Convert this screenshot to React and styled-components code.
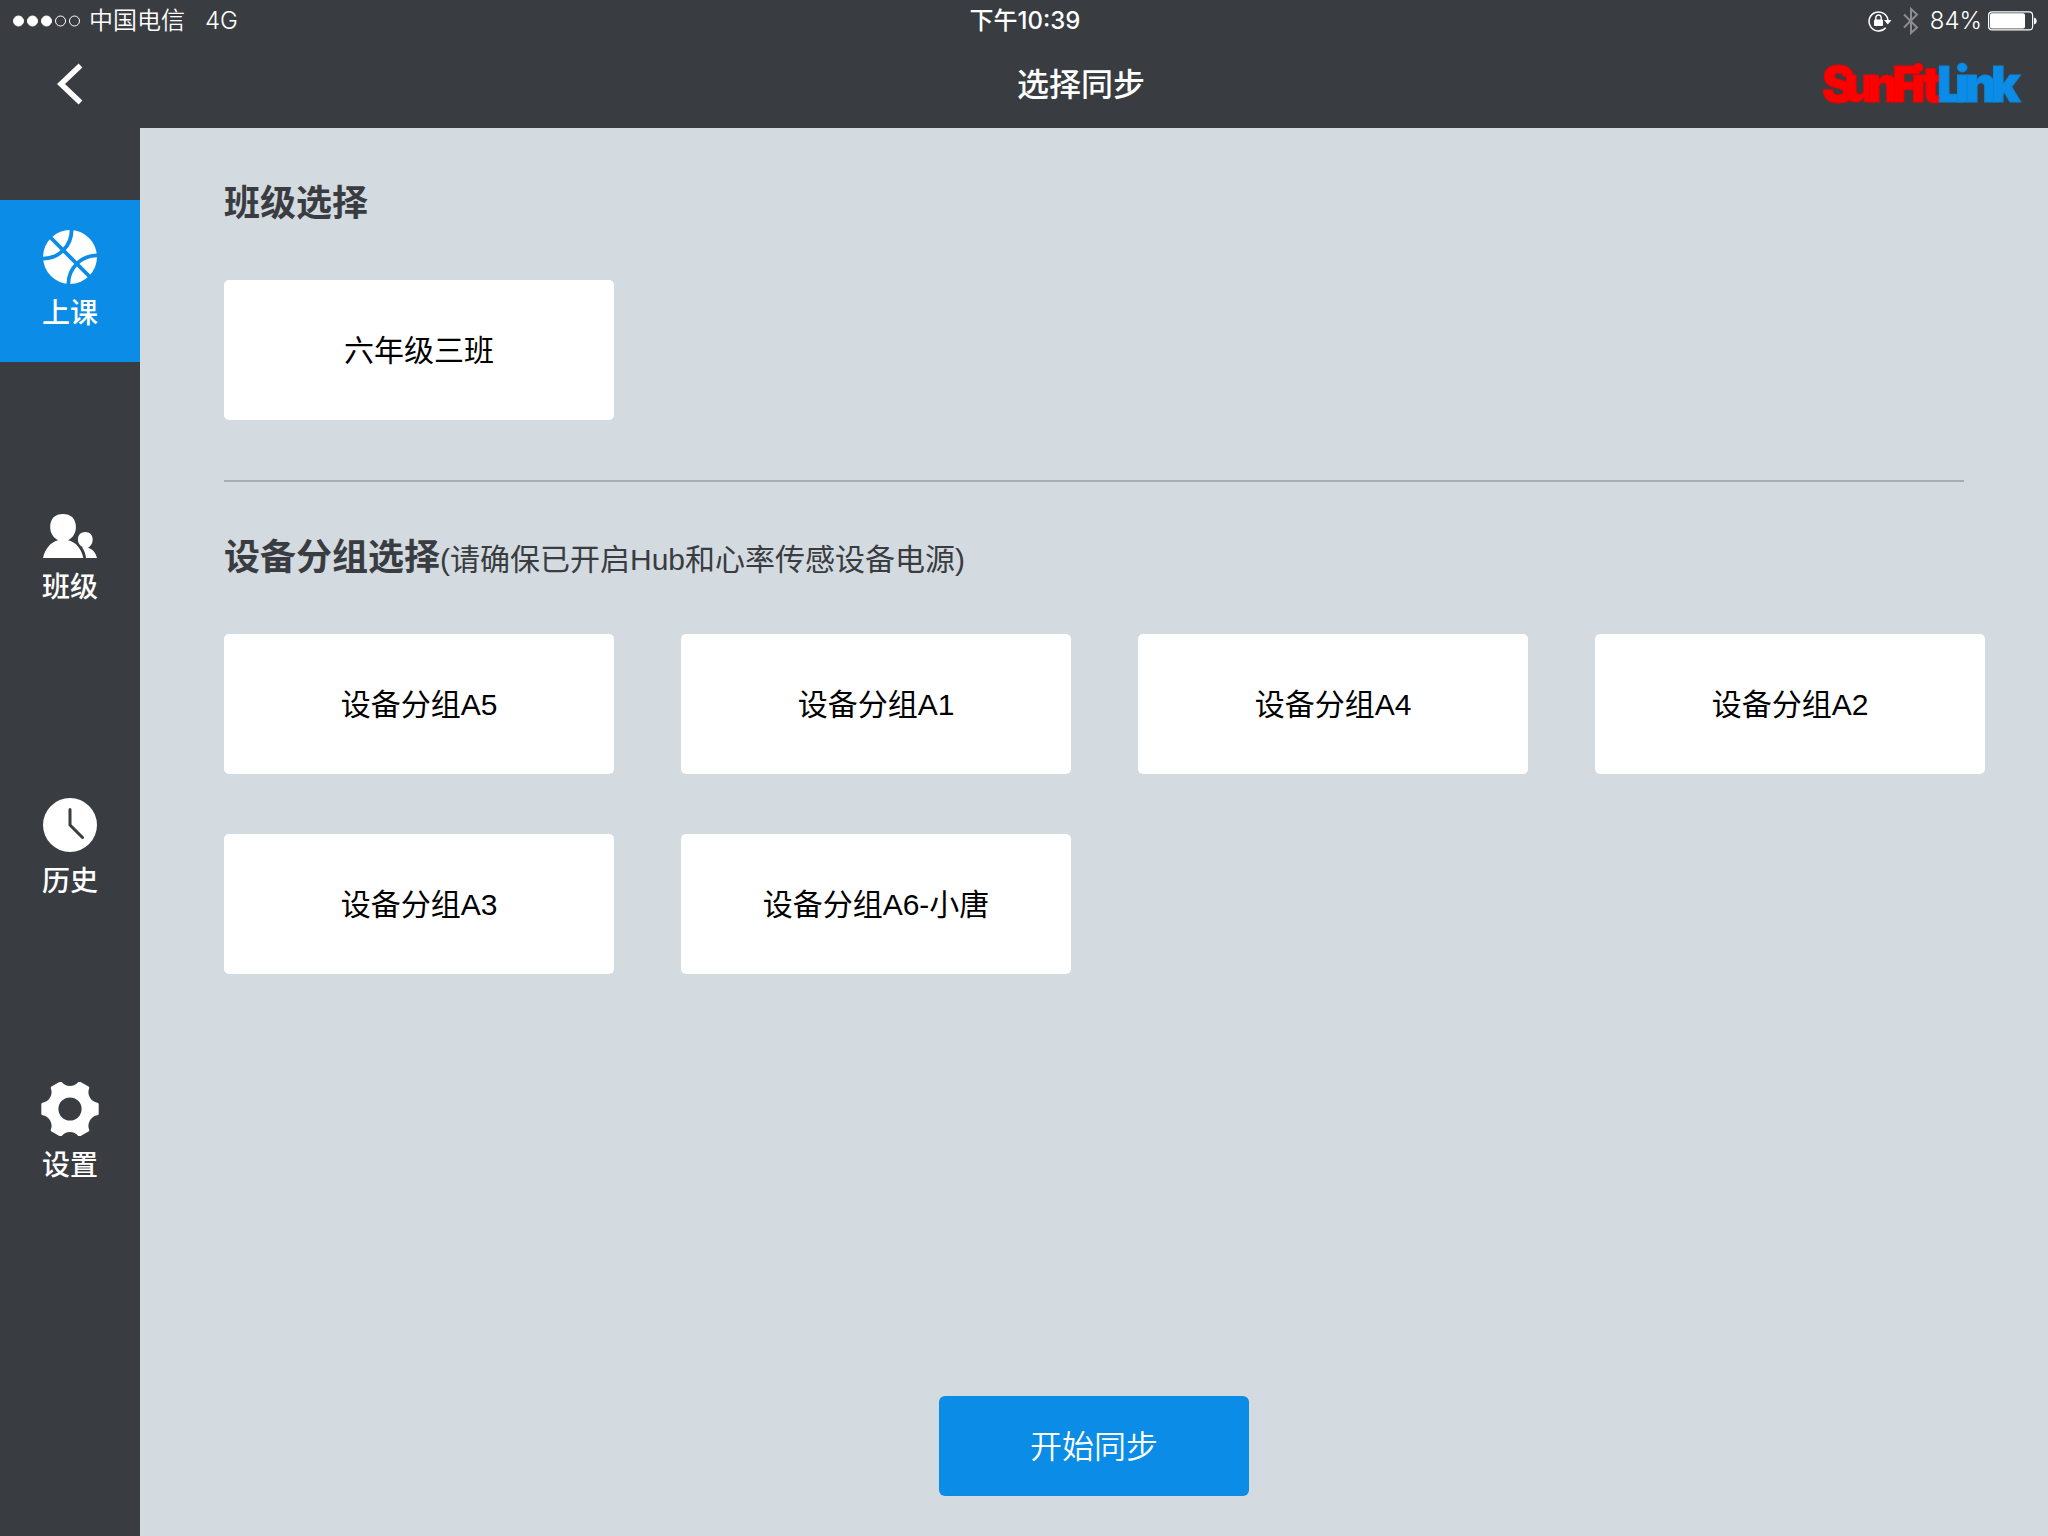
import React from 'react';
import styled, { createGlobalStyle } from 'styled-components';

const DARK = '#393c40';
const BLUE = '#0a8ce7';
const PAGE = '#d3dae0';

const GlobalStyle = createGlobalStyle`
  *,
  *::before,
  *::after {
    box-sizing: border-box;
  }

  body {
    margin: 0;
    background: ${PAGE};
    font-family: 'Liberation Sans', 'Noto Sans CJK SC', sans-serif;
    color: ${DARK};
  }

  button {
    font-family: inherit;
    border: none;
    padding: 0;
    cursor: pointer;
  }
`;

const Screen = styled.div`
  min-height: 100vh;
  display: flex;
  flex-direction: column;
`;

const StatusBar = styled.div`
  display: grid;
  grid-template-columns: 1fr auto 1fr;
  align-items: center;
  height: 40px;
  padding: 2px 11px 0 13px;
  background: ${DARK};
  color: #fff;
  font-family: Inter, 'Noto Sans CJK SC', sans-serif;
  font-size: 24px;
  line-height: 32px;
  font-weight: 350;
`;

const StatusLeft = styled.div`
  display: flex;
  align-items: center;
`;

const Dots = styled.svg`
  margin-right: 8px;
`;

const Network = styled.span`
  margin-left: 20px;
`;

const Clock = styled.time`
  font-weight: 500;
`;

const StatusRight = styled.div`
  display: flex;
  align-items: center;
  justify-content: flex-end;
`;

const Bluetooth = styled.svg`
  margin-left: 11px;
`;

const Battery = styled.div`
  display: flex;
  align-items: center;
  gap: 6px;
  margin-left: 11px;
`;

const Header = styled.header`
  display: grid;
  grid-template-columns: 140px 1fr;
  align-items: center;
  height: 88px;
  padding-right: 26px;
  background: ${DARK};
  color: #fff;
`;

const BackButton = styled.button`
  display: flex;
  align-items: center;
  justify-content: center;
  height: 88px;
  background: none;
`;

const Title = styled.h1`
  grid-area: 1 / 2;
  justify-self: center;
  margin: 0;
  padding-top: 2px;
  font-size: 32px;
  line-height: 48px;
  font-weight: 500;
`;

const Logo = styled.svg`
  grid-area: 1 / 2;
  justify-self: end;
  margin-right: -4px;
  font-family: Inter, sans-serif;
  font-size: 49px;
  font-weight: 900;
`;

const Body = styled.div`
  flex: 1;
  display: flex;
`;

const Sidebar = styled.nav`
  flex: 0 0 140px;
  display: flex;
  flex-direction: column;
  gap: 122px;
  padding: 72px 0;
  background: ${DARK};
`;

const NavItem = styled.a`
  display: flex;
  flex-direction: column;
  align-items: center;
  gap: 10px;
  height: 162px;
  padding-top: 30px;
  background: ${({ $active }) => ($active ? BLUE : 'transparent')};
  color: #fff;
  font-size: 28px;
  line-height: 40px;
  font-weight: 500;
  text-decoration: none;
`;

const Main = styled.main`
  flex: 1;
  display: flex;
  flex-direction: column;
  padding: 0 63px 40px 84px;
`;

const Section = styled.section`
  padding: 50px 0 60px;
`;

const Heading = styled.h2`
  margin: 0 0 50px;
  font-size: 36px;
  line-height: 52px;
  font-weight: 600;
`;

const Hint = styled.span`
  font-size: 30px;
  line-height: 44px;
  font-weight: 400;
`;

const Cards = styled.div`
  display: grid;
  grid-template-columns: repeat(4, 1fr);
  gap: 60px 67px;
`;

const Card = styled.button`
  height: 140px;
  padding-top: 2px;
  border-radius: 5px;
  background: #fff;
  color: #000;
  font-size: 30px;
  line-height: 44px;
`;

const Divider = styled.hr`
  width: calc(100% - 21px);
  height: 2px;
  margin: 0;
  border: none;
  background: #a4adb6;
`;

// The footer is centred on the whole content pane, not on the card grid.
const Footer = styled.footer`
  display: flex;
  justify-content: center;
  margin-top: auto;
  padding-right: 21px;
`;

const StartButton = styled.button`
  width: 310px;
  height: 100px;
  padding-top: 2px;
  border-radius: 6px;
  background: ${BLUE};
  color: #fff;
  font-size: 32px;
  line-height: 48px;
  font-weight: 350;
`;

function BallIcon() {
  return (
    <svg width="54" height="54" viewBox="0 0 54 54" aria-hidden="true">
      <circle cx="27" cy="27" r="27" fill="#fff" />
      <g fill="none" stroke={BLUE} strokeWidth="3.8">
        <path d="M7 7 47 47" />
        <circle cx="0" cy="0" r="28.6" />
        <circle cx="54" cy="54" r="28.6" />
      </g>
    </svg>
  );
}

function PeopleIcon() {
  return (
    <svg
      width="54"
      height="44"
      viewBox="0 0 54 44"
      fill="#fff"
      aria-hidden="true"
    >
      <path d="M20 0c8 0 12.9 4.6 12.9 13 0 6.3-3.1 10.9-7.9 13.3C32.6 28 38.5 34.5 40.3 44H0c2-9.5 7.9-16 15.3-17.7C10.4 23.9 7.2 19.3 7.2 13 7.2 4.6 12 0 20 0Z" />
      <path d="M42.3 18c4.6 0 7.4 3 7.4 7.5 0 3.8-1.9 6.7-4.6 8.3 4.6 1.5 7.8 5.2 8.9 10.2H43c-.4-4.2-1.7-7.6-3.9-10.4l1-.3c-3.2-1.5-5.2-4.3-5.2-7.8 0-4.5 2.8-7.5 7.4-7.5Z" />
    </svg>
  );
}

function HistoryIcon() {
  return (
    <svg width="54" height="54" viewBox="0 0 54 54" aria-hidden="true">
      <circle cx="27" cy="27" r="27" fill="#fff" />
      <path
        d="M27 11.5V27l12.5 12.5"
        fill="none"
        stroke={DARK}
        strokeWidth="3"
        strokeLinecap="round"
        strokeLinejoin="round"
      />
    </svg>
  );
}

const polar = (radius, degrees) => {
  const angle = (degrees * Math.PI) / 180;
  const x = 29 + radius * Math.cos(angle);
  const y = 27 + radius * Math.sin(angle);
  return `${x.toFixed(2)} ${y.toFixed(2)}`;
};

// Six teeth, each followed by a scooped valley.
const gearPath = [0, 60, 120, 180, 240, 300]
  .map(
    (a) =>
      `${a ? 'L' : 'M'}${polar(27.6, a - 10)}L${polar(27.6, a + 10)}` +
      `C${polar(20.5, a + 17)} ${polar(20.5, a + 43)} ${polar(27.6, a + 50)}`
  )
  .join('');

function GearIcon() {
  return (
    <svg width="58" height="54" viewBox="0 0 58 54" aria-hidden="true">
      <path
        d={`${gearPath}Z`}
        fill="#fff"
        stroke="#fff"
        strokeWidth="3"
        strokeLinejoin="round"
      />
      <circle cx="29" cy="27" r="11.6" fill={DARK} />
    </svg>
  );
}

function SignalDots() {
  return (
    <Dots width="68" height="12" viewBox="0 0 68 12" aria-hidden="true">
      {[0, 1, 2, 3, 4].map((i) => (
        <circle
          key={i}
          cx={5.5 + i * 14}
          cy="6"
          r="5"
          fill={i < 3 ? '#fff' : 'none'}
          stroke="#fff"
        />
      ))}
    </Dots>
  );
}

function RotationLockIcon() {
  return (
    <svg
      width="24"
      height="22"
      viewBox="0 0 24 22"
      fill="none"
      aria-hidden="true"
    >
      <path
        d="M17.7 17.7A9.5 9.5 0 1 1 20 10.5"
        stroke="#fff"
        strokeWidth="1.5"
      />
      <path d="M16 10h7.5l-3.7 4.5Z" fill="#fff" />
      <rect x="6" y="9.5" width="9" height="6.5" rx="1" fill="#fff" />
      <path
        d="M7.8 10V7.7a2.7 2.7 0 0 1 5.4 0V10"
        stroke="#fff"
        strokeWidth="1.4"
      />
    </svg>
  );
}

function BluetoothIcon() {
  return (
    <Bluetooth
      width="16"
      height="28"
      viewBox="0 0 16 28"
      fill="none"
      stroke="#8b8d91"
      strokeWidth="2"
      aria-hidden="true"
    >
      <path d="M1 7.5 14 20.5l-6 5.5V2l6 5.5L1 20.5" />
    </Bluetooth>
  );
}

function BatteryIcon() {
  return (
    <svg width="49" height="20" viewBox="0 0 49 20" aria-hidden="true">
      <rect
        x="0.6"
        y="0.9"
        width="44"
        height="18"
        rx="3.5"
        fill="none"
        stroke="#fff"
        strokeWidth="1.2"
      />
      <rect x="2" y="2.3" width="35" height="15.2" rx="1.8" fill="#fff" />
      <path
        d="M46 6.5c1.7.3 2.7 1.6 2.7 3.5s-1 3.2-2.7 3.5Z"
        fill="#fff"
      />
    </svg>
  );
}

// The letters of the wordmark overlap, each one drawn over the one before.
const brandLetters = [
  ['S', 0],
  ['u', 22],
  ['n', 45],
  ['F', 70],
  ['i', 89],
  ['t', 100],
  ['L', 115],
  ['i', 133],
  ['n', 143],
  ['k', 169],
];

function BrandLogo() {
  return (
    <Logo
      width="204"
      height="64"
      viewBox="0 0 204 64"
      role="img"
      aria-label="SunFitLink"
    >
      <text y="50">
        {brandLetters.map(([letter, x], i) => (
          <tspan
            key={x}
            x={x}
            fill={i < 6 ? '#f00' : BLUE}
            stroke={i < 6 ? '#ec0000' : '#0a86dc'}
          >
            {letter}
          </tspan>
        ))}
      </text>
    </Logo>
  );
}

const navItems = [
  { id: 'lesson', label: '上课', Icon: BallIcon },
  { id: 'class', label: '班级', Icon: PeopleIcon },
  { id: 'history', label: '历史', Icon: HistoryIcon },
  { id: 'settings', label: '设置', Icon: GearIcon },
];

const classes = ['六年级三班'];

const deviceGroups = [
  '设备分组A5',
  '设备分组A1',
  '设备分组A4',
  '设备分组A2',
  '设备分组A3',
  '设备分组A6-小唐',
];

function CardList({ items }) {
  return (
    <Cards>
      {items.map((name) => (
        <Card key={name} type="button">
          {name}
        </Card>
      ))}
    </Cards>
  );
}

function App() {
  return (
    <Screen lang="zh-CN">
      <GlobalStyle />
      <StatusBar>
        <StatusLeft>
          <SignalDots />
          <span>中国电信</span>
          <Network>4G</Network>
        </StatusLeft>
        <Clock>下午10:39</Clock>
        <StatusRight>
          <RotationLockIcon />
          <BluetoothIcon />
          <Battery>
            <span>84%</span>
            <BatteryIcon />
          </Battery>
        </StatusRight>
      </StatusBar>
      <Header>
        <BackButton type="button" aria-label="返回">
          <svg width="26" height="42" viewBox="0 0 26 42" aria-hidden="true">
            <path
              d="M23.5 2.5 4 21l19.5 18.5"
              fill="none"
              stroke="#fff"
              strokeWidth="5.5"
            />
          </svg>
        </BackButton>
        <Title>选择同步</Title>
        <BrandLogo />
      </Header>
      <Body>
        <Sidebar>
          {navItems.map(({ id, label, Icon }) => (
            <NavItem key={id} href={`#${id}`} $active={id === 'lesson'}>
              <Icon />
              {label}
            </NavItem>
          ))}
        </Sidebar>
        <Main>
          <Section>
            <Heading>班级选择</Heading>
            <CardList items={classes} />
          </Section>
          <Divider />
          <Section>
            <Heading>
              设备分组选择
              <Hint>(请确保已开启Hub和心率传感设备电源)</Hint>
            </Heading>
            <CardList items={deviceGroups} />
          </Section>
          <Footer>
            <StartButton type="button">开始同步</StartButton>
          </Footer>
        </Main>
      </Body>
    </Screen>
  );
}

export default App;
